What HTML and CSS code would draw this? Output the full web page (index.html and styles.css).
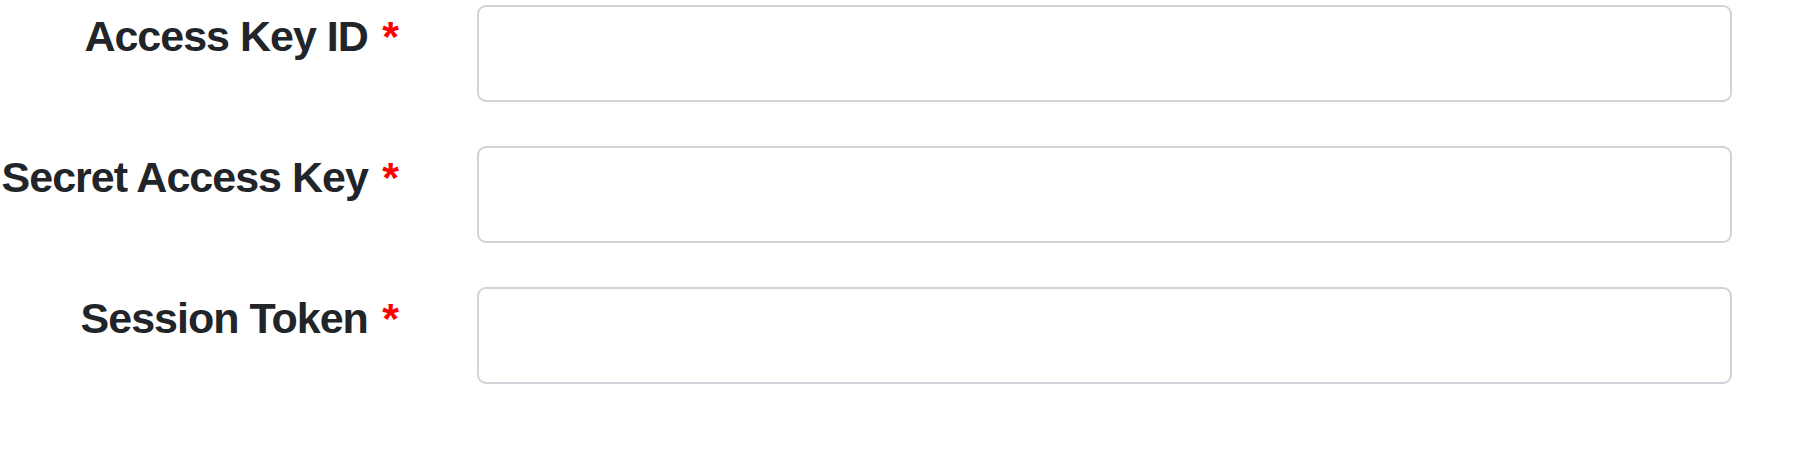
FILE: index.html
```html
<!DOCTYPE html>
<html>
<head>
<meta charset="utf-8">
<link rel="stylesheet" href="styles.css">
</head>
<body>
<form class="form">
  <div class="row">
    <label class="label" for="ak">Access Key ID <span class="req">*</span></label>
    <input class="input" id="ak" type="text">
  </div>
  <div class="row">
    <label class="label" for="sk">Secret Access Key <span class="req">*</span></label>
    <input class="input" id="sk" type="text">
  </div>
  <div class="row">
    <label class="label" for="st">Session Token <span class="req">*</span></label>
    <input class="input" id="st" type="text">
  </div>
</form>
</body>
</html>
```
FILE: styles.css
```css
html, body {
  margin: 0;
  padding: 0;
  background: #ffffff;
}
.form {
  display: flex;
  flex-direction: column;
  gap: 44px;
  padding-top: 5px;
}
.row {
  display: grid;
  grid-template-columns: 398px 1255px;
  column-gap: 79px;
  align-items: start;
}
.label {
  font-family: "Liberation Sans", Arial, sans-serif;
  font-weight: 700;
  font-size: 43px;
  letter-spacing: -1px;
  line-height: normal;
  color: #212529;
  text-align: right;
  white-space: nowrap;
  padding-top: 7px;
}
.req {
  color: #ff0000;
  margin-left: 3.5px;
}
.input {
  box-sizing: border-box;
  height: 97px;
  width: 100%;
  margin: 0;
  border: 2px solid #ced4da;
  border-radius: 9px;
  background: #ffffff;
  outline: none;
}
```
